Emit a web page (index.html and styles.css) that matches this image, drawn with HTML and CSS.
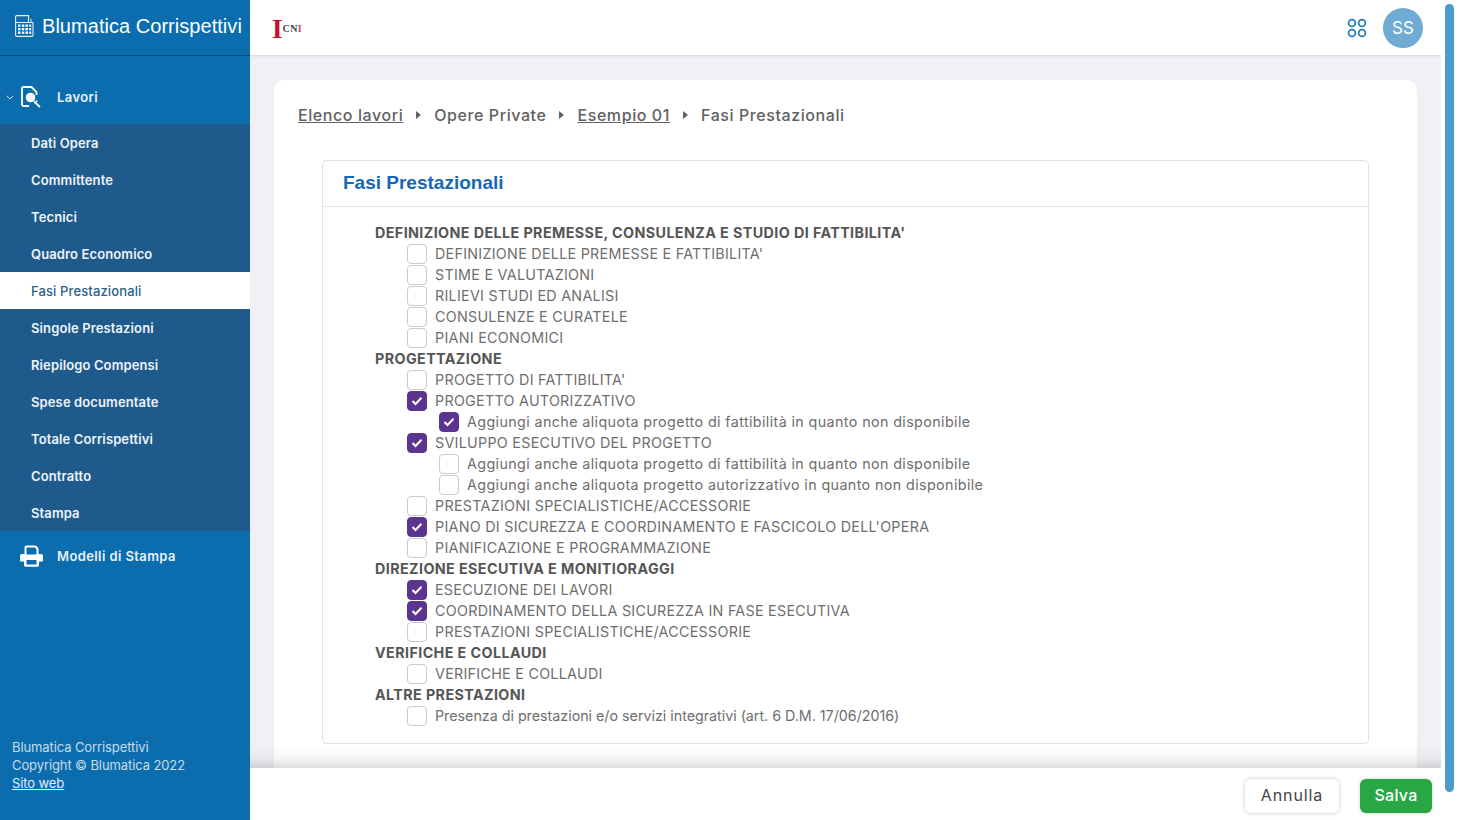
FILE: index.html
```html
<!DOCTYPE html>
<html lang="it">
<head>
<meta charset="utf-8">
<title>Blumatica Corrispettivi</title>
<link rel="stylesheet" href="styles.css">
</head>
<body>
<div class="app">
  <aside class="sidebar">
    <div class="brand">
      <svg class="brand-icon" viewBox="0 0 19 22" fill="none" stroke="#e4f0f8" stroke-width="1.100"><path d="M.6 7.500V1.700C.6 1 1.100.6 1.700.6H13.500V7.500"/><path d="M15 3.500 16.500 5.500M16 7.500V4.500" stroke-width=".8"/><path d="M.6 7.500H18V20.300C18 20.900 17.600 21.400 17 21.400H1.700C1.100 21.400.6 20.900.6 20.300Z"/><g fill="#fff" stroke="none"><rect x="3" y="9.500" width="2.500" height="2.300"/><rect x="6.800" y="9.500" width="2.500" height="2.300"/><rect x="10.500" y="9.500" width="2.500" height="2.300"/><rect x="14.200" y="9.500" width="2" height="2.300"/><rect x="3" y="13" width="2.500" height="2.300"/><rect x="6.800" y="13" width="2.500" height="2.300"/><rect x="10.500" y="13" width="2.500" height="2.300"/><rect x="14.200" y="13" width="2" height="2.300"/><rect x="3" y="16.500" width="2.500" height="2.300"/><rect x="6.800" y="16.500" width="2.500" height="2.300"/><rect x="10.500" y="16.500" width="2.500" height="2.300"/><rect x="14.200" y="16.500" width="2" height="2.300"/></g></svg>
      <span class="brand-name">Blumatica Corrispettivi</span>
    </div>
    <nav class="nav">
      <div class="nav-head">
        <svg class="chevron" viewBox="0 0 8 5" fill="none" stroke="#cfe3f2" stroke-width="1"><path d="M.7.7 4 4 7.300.7"/></svg>
        <svg class="nav-icon lavori-icon" viewBox="0 0 20 22" fill="none"><path d="M8 20H2.500C1.700 20 1 19.300 1 18.500V2.500C1 1.700 1.700 1 2.500 1H10.500L15.500 6V9" stroke="#fff" stroke-width="1.800"/><path d="M15.500 14.500V16" stroke="#fff" stroke-width="1.800"/><circle cx="9.500" cy="11.500" r="4.800" fill="#fff"/><path d="M13 15.500 19 21" stroke="#fff" stroke-width="1.700"/></svg>
        <span class="nav-label">Lavori</span>
      </div>
      <ul class="sub">
        <li class="sub-item">Dati Opera</li>
        <li class="sub-item">Committente</li>
        <li class="sub-item">Tecnici</li>
        <li class="sub-item">Quadro Economico</li>
        <li class="sub-item active">Fasi Prestazionali</li>
        <li class="sub-item">Singole Prestazioni</li>
        <li class="sub-item">Riepilogo Compensi</li>
        <li class="sub-item">Spese documentate</li>
        <li class="sub-item">Totale Corrispettivi</li>
        <li class="sub-item">Contratto</li>
        <li class="sub-item">Stampa</li>
      </ul>
      <div class="nav-head print">
        <svg class="nav-icon print-icon" viewBox="0 0 23 22" fill="#fff"><path fill-rule="evenodd" d="M4.500 9V2.500C4.500 1.300 5.500.5 6.500.5H15C15.700.5 16.300.8 16.800 1.300L18 2.500C18.300 2.900 18.500 3.400 18.500 4V9H21C22.100 9 23 9.900 23 11V15.500C23 16.100 22.500 16.500 22 16.500H19V20C19 21 18.200 21.800 17.200 21.800H5.800C4.800 21.800 4 21 4 20V16.500H1C.5 16.500 0 16.100 0 15.500V11C0 9.900.9 9 2 9ZM6.500 2.500V9.500H16.500V4.500L15 2.500ZM6.500 15V19.500H16.500V15Z"/></svg>
        <span class="nav-label">Modelli di Stampa</span>
      </div>
    </nav>
    <footer class="side-foot">
      <div>Blumatica Corrispettivi</div>
      <div>Copyright © Blumatica 2022</div>
      <a class="side-link">Sito web</a>
    </footer>
  </aside>
  <div class="main">
    <div class="upper">
      <div class="column">
        <header class="topbar">
          <div class="logo"><span class="logo-i">I</span><span class="logo-cn">CN</span><span class="logo-last">I</span></div>
          <div class="top-actions">
            <svg class="apps" viewBox="0 0 20 20" fill="none" stroke="#1f7dbd" stroke-width="1.700"><circle cx="5" cy="5" r="3.400"/><circle cx="15" cy="5" r="3.400"/><circle cx="5" cy="15" r="3.400"/><circle cx="15" cy="15" r="3.400"/></svg>
            <div class="avatar">SS</div>
          </div>
        </header>
        <main class="content">
          <section class="card">
            <div class="crumbs">
              <a class="crumb-link">Elenco lavori</a><i class="sep"></i>
              <span>Opere Private</span><i class="sep"></i>
              <a class="crumb-link">Esempio 01</a><i class="sep"></i>
              <span>Fasi Prestazionali</span>
            </div>
            <div class="panel">
              <h2 class="panel-title">Fasi Prestazionali</h2>
              <div class="panel-body">
                <div class="row group">DEFINIZIONE DELLE PREMESSE, CONSULENZA E STUDIO DI FATTIBILITA'</div>
                <div class="row lvl1"><span class="box"></span>DEFINIZIONE DELLE PREMESSE E FATTIBILITA'</div>
                <div class="row lvl1"><span class="box"></span>STIME E VALUTAZIONI</div>
                <div class="row lvl1"><span class="box"></span>RILIEVI STUDI ED ANALISI</div>
                <div class="row lvl1"><span class="box"></span>CONSULENZE E CURATELE</div>
                <div class="row lvl1"><span class="box"></span>PIANI ECONOMICI</div>
                <div class="row group">PROGETTAZIONE</div>
                <div class="row lvl1"><span class="box"></span>PROGETTO DI FATTIBILITA'</div>
                <div class="row lvl1"><span class="box on"><svg viewBox="0 0 12 10" fill="none" stroke="#fff" stroke-width="2"><path d="M1.500 5 4.500 8 10.500 1.800"/></svg></span>PROGETTO AUTORIZZATIVO</div>
                <div class="row lvl2"><span class="box on"><svg viewBox="0 0 12 10" fill="none" stroke="#fff" stroke-width="2"><path d="M1.500 5 4.500 8 10.500 1.800"/></svg></span>Aggiungi anche aliquota progetto di fattibilità in quanto non disponibile</div>
                <div class="row lvl1"><span class="box on"><svg viewBox="0 0 12 10" fill="none" stroke="#fff" stroke-width="2"><path d="M1.500 5 4.500 8 10.500 1.800"/></svg></span>SVILUPPO ESECUTIVO DEL PROGETTO</div>
                <div class="row lvl2"><span class="box"></span>Aggiungi anche aliquota progetto di fattibilità in quanto non disponibile</div>
                <div class="row lvl2"><span class="box"></span>Aggiungi anche aliquota progetto autorizzativo in quanto non disponibile</div>
                <div class="row lvl1"><span class="box"></span>PRESTAZIONI SPECIALISTICHE/ACCESSORIE</div>
                <div class="row lvl1"><span class="box on"><svg viewBox="0 0 12 10" fill="none" stroke="#fff" stroke-width="2"><path d="M1.500 5 4.500 8 10.500 1.800"/></svg></span>PIANO DI SICUREZZA E COORDINAMENTO E FASCICOLO DELL'OPERA</div>
                <div class="row lvl1"><span class="box"></span>PIANIFICAZIONE E PROGRAMMAZIONE</div>
                <div class="row group">DIREZIONE ESECUTIVA E MONITIORAGGI</div>
                <div class="row lvl1"><span class="box on"><svg viewBox="0 0 12 10" fill="none" stroke="#fff" stroke-width="2"><path d="M1.500 5 4.500 8 10.500 1.800"/></svg></span>ESECUZIONE DEI LAVORI</div>
                <div class="row lvl1"><span class="box on"><svg viewBox="0 0 12 10" fill="none" stroke="#fff" stroke-width="2"><path d="M1.500 5 4.500 8 10.500 1.800"/></svg></span>COORDINAMENTO DELLA SICUREZZA IN FASE ESECUTIVA</div>
                <div class="row lvl1"><span class="box"></span>PRESTAZIONI SPECIALISTICHE/ACCESSORIE</div>
                <div class="row group">VERIFICHE E COLLAUDI</div>
                <div class="row lvl1"><span class="box"></span>VERIFICHE E COLLAUDI</div>
                <div class="row group">ALTRE PRESTAZIONI</div>
                <div class="row lvl1 plain"><span class="box"></span>Presenza di prestazioni e/o servizi integrativi (art. 6 D.M. 17/06/2016)</div>
              </div>
            </div>
          </section>
          <div class="fade"></div>
        </main>
      </div>
      <div class="scrolltrack"><div class="thumb"></div></div>
    </div>
    <div class="actions">
      <button class="btn cancel">Annulla</button>
      <button class="btn save">Salva</button>
    </div>
  </div>
</div>
</body>
</html>
```
FILE: styles.css
```css
* { box-sizing: border-box; }
html, body { margin: 0; height: 100%; overflow: hidden; }
body { font-family: Inter, "Noto Sans", sans-serif; background: #fff; color: #616161; }
.app { display: flex; width: 1458px; height: 820px; }

.sidebar { width: 250px; flex: none; background: #0b6dad; color: #fff; display: flex; flex-direction: column; position: relative; z-index: 2; }
.brand { height: 56px; flex: none; display: flex; align-items: center; gap: 8px; padding-left: 15px; padding-bottom: 3px; border-bottom: 1px solid #0b4f82; }
.brand-icon { width: 19px; height: 22px; }
.brand-name { font-family: "Liberation Sans", Arial, sans-serif; font-size: 20px; white-space: nowrap; letter-spacing: .04px; }
.nav { padding-top: 16px; flex: 1; }
.nav-head { height: 52px; display: flex; align-items: center; padding-left: 6px; padding-bottom: 2px; position: relative; }
.nav-label { font-size: 13px; font-weight: 600; color: #e9f2f9; position: absolute; left: 57px; letter-spacing: .4px; }
.chevron { width: 8px; height: 5px; margin-right: 7px; }
.lavori-icon { width: 20px; height: 22px; }
.print { height: 50px; padding-left: 20px; padding-bottom: 0; }
.print-icon { width: 23px; height: 22px; }
.sub { list-style: none; margin: 0; padding: 0; background: #1e5a8c; }
.sub-item { height: 37px; line-height: 39px; padding-left: 31px; font-size: 13px; font-weight: 600; color: #eef4f9; letter-spacing: .12px; }
.sub-item.active { background: #fff; color: #2c5f8a; font-weight: 500; }
.side-foot { height: 82px; flex: none; padding-left: 12px; font-size: 13px; line-height: 18px; color: #c6dceb; letter-spacing: -.1px; }
.side-link { color: #e3eef6; text-decoration: underline; }

.main { flex: 1; min-width: 0; display: flex; flex-direction: column; }
.upper { flex: none; height: 768px; display: flex; }
.column { width: 1191px; flex: none; display: flex; flex-direction: column; background: #f0f0f6; }
.topbar { height: 56px; flex: none; background: #fff; border-bottom: 1px solid #dcdcdc; box-shadow: 0 1px 4px rgba(0,0,0,.06); display: flex; align-items: center; justify-content: space-between; padding: 0 18px 0 22px; }
.logo { display: flex; align-items: flex-start; height: 24px; margin-top: 2px; font-family: "Liberation Serif", serif; font-weight: 700; }
.logo-i { color: #c8102e; font-size: 27px; line-height: 24px; }
.logo-cn { color: #444; font-size: 10px; line-height: 24px; letter-spacing: .4px; }
.logo-last { color: #d04a5a; font-size: 10px; line-height: 24px; }
.top-actions { display: flex; align-items: center; gap: 16px; }
.apps { width: 20px; height: 20px; }
.avatar { width: 40px; height: 40px; border-radius: 50%; background: #6fabd2; color: #fff; font-size: 17px; display: flex; align-items: center; justify-content: center; }

.content { flex: 1; min-height: 0; overflow: hidden; position: relative; padding: 24px 24px 0; }
.card { background: #fff; border-radius: 10px; height: 720px; padding: 24px 48px 0 24px; }
.crumbs { display: flex; align-items: center; height: 22px; font-size: 16px; font-weight: 500; color: #616161; letter-spacing: .58px; white-space: nowrap; }
.crumb-link { text-decoration: underline; }
.sep { width: 0; height: 0; margin: 0 13px; border-left: 5px solid #616161; border-top: 4.500px solid transparent; border-bottom: 4.500px solid transparent; }
.panel { margin: 34px 0 0 24px; border: 1px solid #e2e2e2; border-radius: 4px; padding-bottom: 17px; }
.panel-title { margin: 0; height: 46px; line-height: 43px; padding-left: 20px; border-bottom: 1px solid #e2e2e2; font-family: "Liberation Sans", Arial, sans-serif; font-size: 19px; font-weight: 700; color: #1767b9; }
.panel-body { padding: 15px 0 0 52px; }
.row { height: 21px; display: flex; align-items: center; font-size: 14.300px; color: #6e6e6e; white-space: nowrap; }
.group { font-weight: 700; color: #555; letter-spacing: .41px; }
.lvl1 { padding-left: 32px; letter-spacing: .28px; }
.lvl2 { padding-left: 64px; letter-spacing: .39px; }
.plain { letter-spacing: -.02px; }
.box { width: 20px; height: 20px; flex: none; margin-right: 8px; border: 1px solid #c9c9c9; border-radius: 4px; background: #fff; display: flex; align-items: center; justify-content: center; }
.box.on { background: #5b3490; border-color: #5b3490; }
.box svg { width: 12px; height: 10px; }
.fade { position: absolute; left: 0; right: 0; bottom: 0; height: 26px; background: linear-gradient(to bottom, rgba(0,0,0,0), rgba(0,0,0,.025) 55%, rgba(0,0,0,.13)); }
.scrolltrack { flex: 1; background: #fff; padding: 4px 4px 0; }
.thumb { width: 9px; height: 788px; border-radius: 5px; background: #4a9cc9; position: relative; z-index: 3; }

.actions { flex: 1; display: flex; align-items: center; justify-content: flex-end; gap: 21px; padding: 4px 26px 0 0; background: #fff; }
.btn { height: 34px; border-radius: 6px; border: 0; padding-bottom: 3px; font-family: inherit; font-size: 16px; letter-spacing: .3px; }
.cancel { width: 94px; background: #fff; color: #444; letter-spacing: .9px; box-shadow: 0 0 4px rgba(0,0,0,.22); }
.save { width: 72px; background: #28a745; color: #fff; font-weight: 500; box-shadow: 0 0 3px rgba(0,0,0,.2); }
```
